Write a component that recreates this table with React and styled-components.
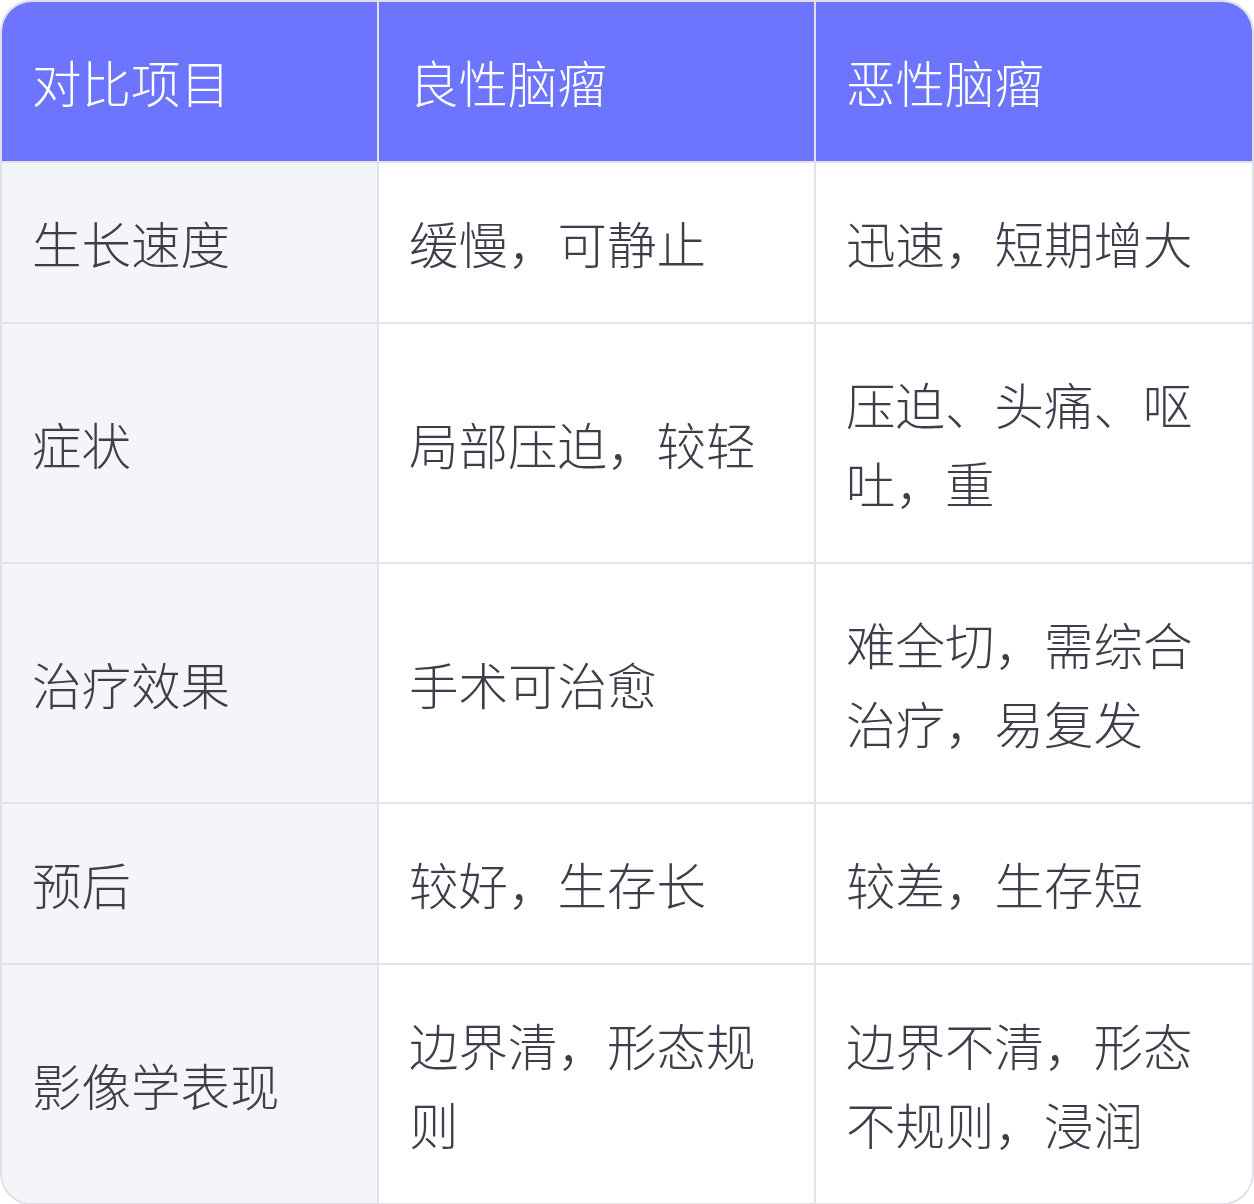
import React from 'react';
import styled, { createGlobalStyle } from 'styled-components';

const GlobalStyle = createGlobalStyle`
  html, body {
    margin: 0;
    padding: 0;
    background: #ffffff;
  }
  body {
    font-family: "Noto Sans CJK SC", "Noto Sans", sans-serif;
  }
`;

const Table = styled.div`
  width: 1254px;
  box-sizing: border-box;
  border: 2px solid #dfe0e5;
  border-radius: 32px;
  overflow: hidden;
  display: grid;
  grid-template-columns: 377px 437px 1fr;
  background: #ffffff;
`;

const Cell = styled.div`
  box-sizing: border-box;
  padding: 40px 28px 40px 30px;
  font-size: 49.5px;
  line-height: 79px;
  font-weight: 300;
  color: ${p => (p.$head ? '#ffffff' : '#3c3e4a')};
  background: ${p => (p.$head ? '#6d74fe' : p.$label ? '#f4f5f9' : '#ffffff')};
  border-right: ${p => (p.$last ? 'none' : '2px solid #e2e3e8')};
  border-bottom: ${p => (p.$bottom ? 'none' : '2px solid #e2e3e8')};
  display: flex;
  align-items: center;
  word-break: break-all;
`;

const HEAD = ['对比项目', '良性脑瘤', '恶性脑瘤'];

const ROWS = [
  ['生长速度', '缓慢，可静止', '迅速，短期增大'],
  ['症状', '局部压迫，较轻', '压迫、头痛、呕吐，重'],
  ['治疗效果', '手术可治愈', '难全切，需综合治疗，易复发'],
  ['预后', '较好，生存长', '较差，生存短'],
  ['影像学表现', '边界清，形态规则', '边界不清，形态不规则，浸润'],
];

export default function App() {
  return (
    <>
      <GlobalStyle />
      <Table>
        {HEAD.map((h, i) => (
          <Cell key={h} $head $last={i === 2}>{h}</Cell>
        ))}
        {ROWS.map((row, r) =>
          row.map((text, c) => (
            <Cell
              key={r + '-' + c}
              $label={c === 0}
              $last={c === 2}
              $bottom={r === ROWS.length - 1}
            >
              {text}
            </Cell>
          ))
        )}
      </Table>
    </>
  );
}
